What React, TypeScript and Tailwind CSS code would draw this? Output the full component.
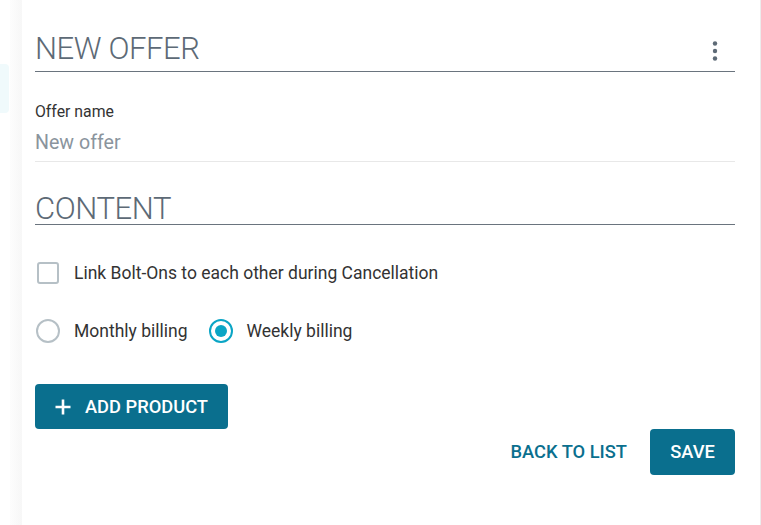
const Kebab = () => (
  <svg width="6" height="20" viewBox="0 0 6 20" className="text-[#5d6a76]" fill="currentColor">
    <circle cx="3" cy="2.5" r="2.2" />
    <circle cx="3" cy="10" r="2.2" />
    <circle cx="3" cy="17.5" r="2.2" />
  </svg>
);

const PlusIcon = () => (
  <svg width="16" height="16" viewBox="0 0 16 16" stroke="currentColor" strokeWidth="2.6" strokeLinecap="butt">
    <path d="M0.5 8h15M8 0.5v15" />
  </svg>
);

const SectionTitle = ({ children }: { children: string }) => (
  <div className="border-b-[1.5px] border-[#6a747e]">
    <h2 className="font-light text-[31px] leading-[30px] text-[#5d6a76] tracking-[-0.4px]">
      {children}
    </h2>
  </div>
);

const App = () => {
  return (
    <div className="flex h-[525px] w-[761px] bg-white font-['Roboto',sans-serif]">
      <div className="w-[10px] pt-[64px]">
        <div className="h-[49px] w-[9px] rounded-r-[4px] bg-[#f0fafc]" />
      </div>
      <div className="w-[12px] bg-gradient-to-r from-[#fdfdfd] to-[#f7f7f7]" />
      <div className="flex-1 border-r border-[#ececec] bg-white pl-[13px] pr-[25px] pt-[34px]">
        <div className="border-b-[1.5px] border-[#6a747e] pb-[7px]">
          <div className="flex items-end justify-between">
            <h2 className="font-light text-[31px] leading-[30px] text-[#5d6a76] tracking-[-0.4px]">
              NEW OFFER
            </h2>
            <button className="mb-[3px] mr-[17px]">
              <Kebab />
            </button>
          </div>
        </div>

        <div className="mt-[30px] border-b border-[#e8e8e8] pb-[5px]">
          <div className="text-[15.8px] leading-[20px] text-[#333]">Offer name</div>
          <div className="mt-[8px] text-[19.6px] leading-[26px] text-[#8a949d]">New offer</div>
        </div>

        <div className="mt-[32px]">
          <SectionTitle>CONTENT</SectionTitle>
        </div>

        <label className="mt-[36px] flex items-center gap-[15px]">
          <span className="ml-[2px] h-[22px] w-[22px] rounded-[3px] border-2 border-[#b6c0c6] bg-white" />
          <span className="text-[17.5px] leading-[24px] text-[#333]">
            Link Bolt-Ons to each other during Cancellation
          </span>
        </label>

        <div className="mt-[34px] flex items-center">
          <label className="flex items-center gap-[14px]">
            <span className="ml-[1px] h-[24px] w-[24px] rounded-full border-2 border-[#b6c0c6] bg-white" />
            <span className="text-[17.5px] leading-[24px] text-[#333]">Monthly billing</span>
          </label>
          <label className="ml-[21px] flex items-center gap-[14px]">
            <span className="flex h-[24px] w-[24px] items-center justify-center rounded-full border-[2.5px] border-[#0aa5c5] bg-white">
              <span className="h-[12px] w-[12px] rounded-full bg-[#0aa5c5]" />
            </span>
            <span className="text-[17.5px] leading-[24px] text-[#333]">Weekly billing</span>
          </label>
        </div>

        <button className="mt-[41px] flex h-[45px] w-[193px] items-center gap-[14px] rounded-[4px] bg-[#0a6f8e] pl-[20px] text-[18.3px] font-medium text-white">
          <PlusIcon />
          ADD PRODUCT
        </button>

        <div className="flex items-center justify-end gap-[23px]">
          <button className="text-[18.3px] font-medium text-[#0a6f8e]">BACK TO LIST</button>
          <button className="h-[46px] w-[85px] rounded-[4px] bg-[#0a6f8e] text-[18.3px] font-medium text-white">
            SAVE
          </button>
        </div>
      </div>
    </div>
  );
};

export default App;
